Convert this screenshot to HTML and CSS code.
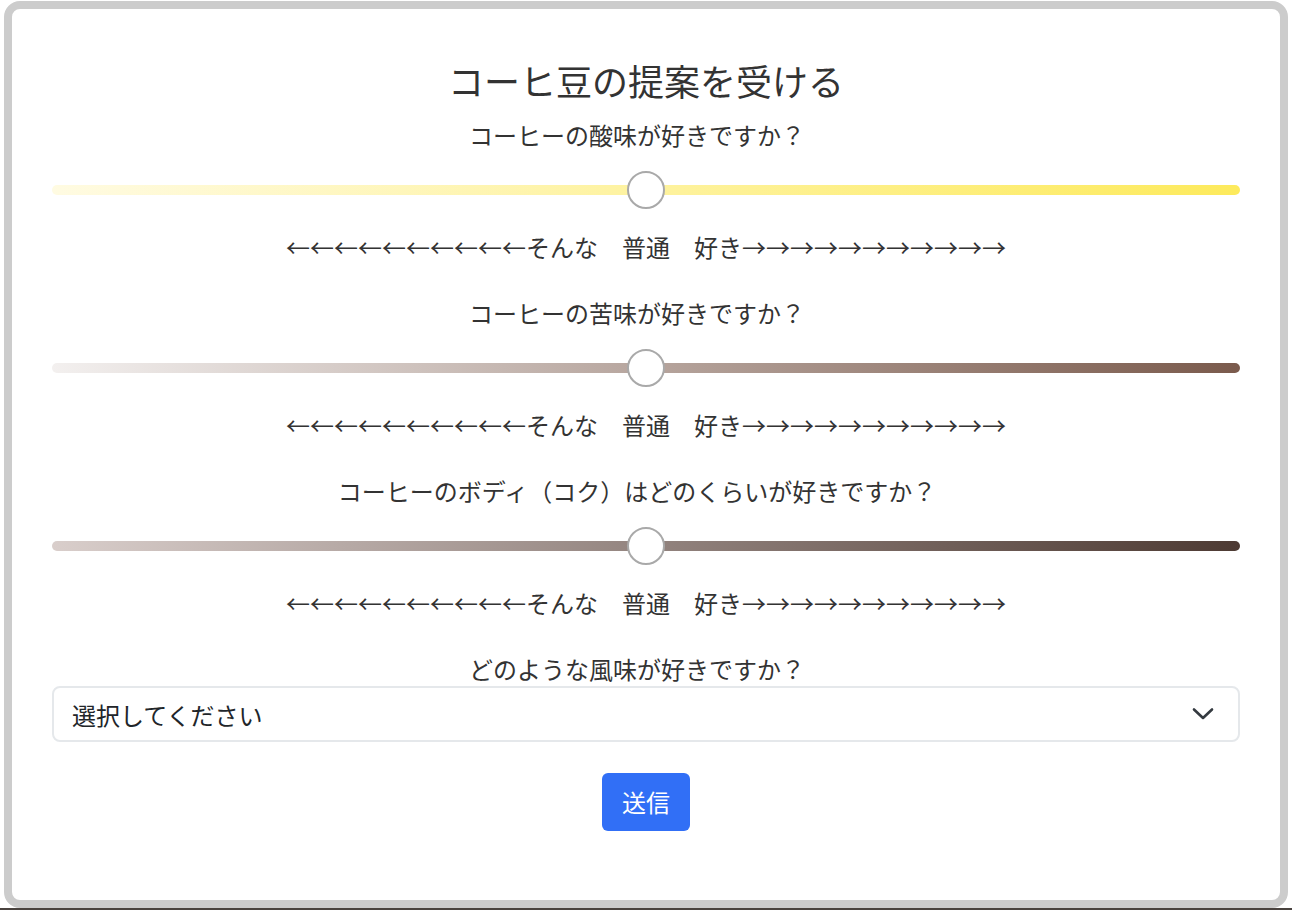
FILE: index.html
```html
<!DOCTYPE html>
<html lang="ja">
<head>
<meta charset="utf-8">
<title>コーヒ豆の提案を受ける</title>
<link rel="stylesheet" href="styles.css">
</head>
<body>
<div class="page">
  <form class="card">
    <h1 class="title">コーヒ豆の提案を受ける</h1>

    <div class="question">
      <label class="label">コーヒーの酸味が好きですか？</label>
      <input class="range range-acid" type="range" min="0" max="100" value="50">
      <div class="scale">←←←←←←←←←←そんな　普通　好き→→→→→→→→→→→</div>
    </div>

    <div class="question">
      <label class="label">コーヒーの苦味が好きですか？</label>
      <input class="range range-bitter" type="range" min="0" max="100" value="50">
      <div class="scale">←←←←←←←←←←そんな　普通　好き→→→→→→→→→→→</div>
    </div>

    <div class="question">
      <label class="label">コーヒーのボディ（コク）はどのくらいが好きですか？</label>
      <input class="range range-body" type="range" min="0" max="100" value="50">
      <div class="scale">←←←←←←←←←←そんな　普通　好き→→→→→→→→→→→</div>
    </div>

    <div class="question question-last">
      <label class="label">どのような風味が好きですか？</label>
      <div class="select">
        <span class="select-text">選択してください</span>
        <svg class="chevron" width="22" height="14" viewBox="0 0 22 14"><path d="M2 2.5 L11 11 L20 2.5" fill="none" stroke="#343a40" stroke-width="2.6" stroke-linecap="round" stroke-linejoin="round"/></svg>
      </div>
    </div>

    <div class="actions">
      <button class="submit" type="button">送信</button>
    </div>
  </form>
</div>
<div class="bottom-line"></div>
</body>
</html>
```

FILE: styles.css
```css
html, body {
  margin: 0;
  padding: 0;
  background: #ffffff;
}

body {
  font-family: "Noto Sans CJK JP", "Noto Sans", sans-serif;
  color: #333333;
  height: 910px;
  overflow: hidden;
}

.page {
  padding: 1px 4px 0 4px;
}

.card {
  box-sizing: border-box;
  height: 907px;
  border: 8px solid #cccccc;
  border-radius: 16px;
  padding: 47px 40px 0 40px;
  display: flex;
  flex-direction: column;
}

.title {
  margin: 0 0 14px 0;
  font-size: 36px;
  font-weight: 400;
  line-height: 48px;
  text-align: center;
}

.question {
  display: flex;
  flex-direction: column;
  margin-bottom: 32px;
}

.question-last {
  margin-bottom: 31px;
}

.label {
  display: block;
  font-size: 24px;
  line-height: 34px;
  text-align: center;
  padding-right: 18px;
  margin-bottom: 18px;
}

.question-last .label {
  margin-bottom: 0;
}

.scale {
  font-size: 24px;
  line-height: 34px;
  text-align: center;
  margin-top: 20px;
  white-space: nowrap;
}

.range {
  -webkit-appearance: none;
  appearance: none;
  display: block;
  width: 100%;
  height: 40px;
  margin: 0;
  background: transparent;
}

.range::-webkit-slider-runnable-track {
  height: 10px;
  border-radius: 5px;
}

.range::-webkit-slider-thumb {
  -webkit-appearance: none;
  appearance: none;
  box-sizing: border-box;
  width: 38px;
  height: 38px;
  margin-top: -14px;
  border-radius: 50%;
  background: #ffffff;
  border: 2px solid #a9a9a9;
}

.range-acid::-webkit-slider-runnable-track {
  background: linear-gradient(to right, #fffbe2, #fdea5c);
}

.range-bitter::-webkit-slider-runnable-track {
  background: linear-gradient(to right, #f3f0ef, #7a5a4c);
}

.range-body::-webkit-slider-runnable-track {
  background: linear-gradient(to right, #d9cecb, #4d3a33);
}

.select {
  box-sizing: border-box;
  height: 56px;
  flex-shrink: 0;
  border: 2px solid #e5e8eb;
  border-radius: 8px;
  display: flex;
  align-items: center;
  justify-content: space-between;
  padding: 0 24px 0 18px;
}

.select-text {
  font-size: 24px;
  color: #212529;
}

.chevron {
  display: block;
}

.actions {
  display: flex;
  justify-content: center;
}

.submit {
  height: 58px;
  padding: 0 20px;
  border: none;
  border-radius: 6px;
  background: #316ff6;
  color: #ffffff;
  font-family: "Noto Sans CJK JP", "Noto Sans", sans-serif;
  font-size: 24px;
  line-height: 58px;
}

.bottom-line {
  height: 2px;
  background: #4a433f;
}
```
